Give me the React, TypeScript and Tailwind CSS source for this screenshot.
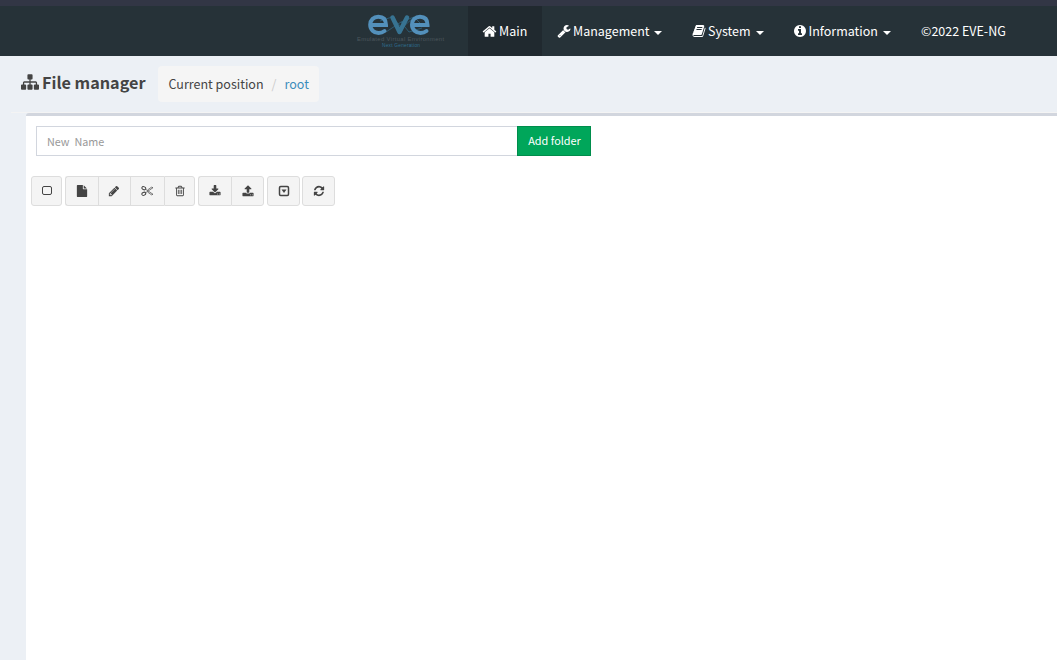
import React from "react";

const font = "font-['Noto_Sans_CJK_SC','Open_Sans',sans-serif]";

const paths = {
  home: "M1472 992v480q0 26-19 45t-45 19h-384v-384h-256v384h-384q-26 0-45-19t-19-45v-480q0-1 .5-3t.5-3l575-474 575 474q1 2 1 6zm223-69l-62 74q-8 9-21 11h-3q-13 0-21-7l-692-577-692 577q-12 8-24 7-13-2-21-11l-62-74q-8-10-7-23.5t11-21.5l719-599q32-26 76-26t76 26l244 204v-195q0-14 9-23t23-9h192q14 0 23 9t9 23v408l219 182q10 8 11 21.5t-7 23.5z",
  wrench: "M448 1472q0-26-19-45t-45-19-45 19-19 45 19 45 45 19 45-19 19-45zm644-420l-682 682q-37 37-90 37-52 0-91-37l-106-108q-38-36-38-90 0-53 38-91l681-681q39 98 114.5 173.5t173.5 114.5zm634-435q0 39-23 106-47 134-164.5 217.5t-258.5 83.5q-185 0-316.5-131.5t-131.5-316.5 131.5-316.5 316.5-131.5q58 0 121.5 16.5t107.5 46.5q16 11 16 28t-16 28l-293 169v224l193 107q5-3 79-48.5t135.5-81 70.5-35.5q15 0 23.5 10t8.5 25z",
  info: "M1152 1376v-160q0-14-9-23t-23-9h-96v-512q0-14-9-23t-23-9h-320q-14 0-23 9t-9 23v160q0 14 9 23t23 9h96v320h-96q-14 0-23 9t-9 23v160q0 14 9 23t23 9h448q14 0 23-9t9-23zm-128-896v-160q0-14-9-23t-23-9h-192q-14 0-23 9t-9 23v160q0 14 9 23t23 9h192q14 0 23-9t9-23zm640 416q0 209-103 385.5t-279.5 279.5-385.5 103-385.5-103-279.5-279.5-103-385.5 103-385.5 279.5-279.5 385.5-103 385.5 103 279.5 279.5 103 385.5z",
  book: "M1703 478q40 57 18 129l-275 906q-19 64-76.5 107.5t-122.5 43.5h-923q-77 0-148.5-53.5t-99.5-131.5q-24-67-2-127 0-4 3-27t4-37q1-8-3-21.5t-3-19.5q2-11 8-21t16.5-23.5 16.5-23.5q23-38 45-91.5t30-91.5q3-10 .5-30t-.5-28q3-11 17-28t17-23q21-36 42-92t25-90q1-9-2.5-32t.5-28q4-13 22-30.5t22-22.5q19-26 42.5-84.5t27.5-96.5q1-8-3-25.5t-2-26.5q2-8 9-18t18-23 17-21q8-12 16.5-30.5t15-35 16-36 19.5-32 26.5-23.5 36-11.5 47.5 5.5l-1 3q38-9 51-9h761q74 0 114 56t18 130l-274 906q-36 119-71.5 153.5t-128.5 34.5h-869q-27 0-38 15-11 16-1 43 24 70 144 70h923q29 0 56-15.5t35-41.5l300-987q7-22 5-57 38 15 59 43zm-1064 2q-4 13 2 22.5t20 9.5h608q13 0 25.5-9.5t16.5-22.5l21-64q4-13-2-22.5t-20-9.5h-608q-13 0-25.5 9.5t-16.5 22.5zm-83 256q-4 13 2 22.5t20 9.5h608q13 0 25.5-9.5t16.5-22.5l21-64q4-13-2-22.5t-20-9.5h-608q-13 0-25.5 9.5t-16.5 22.5z",
  sitemap: "M1792 1248v320q0 40-28 68t-68 28h-320q-40 0-68-28t-28-68v-320q0-40 28-68t68-28h96v-192h-512v192h96q40 0 68 28t28 68v320q0 40-28 68t-68 28h-320q-40 0-68-28t-28-68v-320q0-40 28-68t68-28h96v-192h-512v192h96q40 0 68 28t28 68v320q0 40-28 68t-68 28h-320q-40 0-68-28t-28-68v-320q0-40 28-68t68-28h96v-192q0-52 38-90t90-38h512v-192h-96q-40 0-68-28t-28-68v-320q0-40 28-68t68-28h320q40 0 68 28t28 68v320q0 40-28 68t-68 28h-96v192h512q52 0 90 38t38 90v192h96q40 0 68 28t28 68z",
  file: "M1152 512v-472q22 14 36 28l408 408q14 14 28 36h-472zm-128 32q0 40 28 68t68 28h544v1056q0 40-28 68t-68 28h-1344q-40 0-68-28t-28-68v-1600q0-40 28-68t68-28h800v544z",
  pencil: "M491 1536l91-91-235-235-91 91v107h128v128h107zm523-928q0-22-22-22-10 0-17 7l-542 542q-7 7-7 17 0 22 22 22 10 0 17-7l542-542q7-7 7-17zm-54-192l416 416-832 832h-416v-416zm683 96q0 53-37 90l-166 166-416-416 166-165q36-38 90-38 53 0 91 38l235 234q37 39 37 91z",
  trash: "M704 736v576q0 14-9 23t-23 9h-64q-14 0-23-9t-9-23v-576q0-14 9-23t23-9h64q14 0 23 9t9 23zm256 0v576q0 14-9 23t-23 9h-64q-14 0-23-9t-9-23v-576q0-14 9-23t23-9h64q14 0 23 9t9 23zm256 0v576q0 14-9 23t-23 9h-64q-14 0-23-9t-9-23v-576q0-14 9-23t23-9h64q14 0 23 9t9 23zm128 724v-948h-896v948q0 22 7 40.5t14.5 27 10.5 8.5h832q3 0 10.5-8.5t14.5-27 7-40.5zm-672-1076h448l-48-117q-7-9-17-11h-317q-10 2-17 11zm928 32v64q0 14-9 23t-23 9h-96v948q0 83-47 143.5t-113 60.5h-832q-66 0-113-58.5t-47-141.5v-952h-96q-14 0-23-9t-9-23v-64q0-14 9-23t23-9h309l70-167q15-37 54-63t79-26h320q40 0 79 26t54 63l70 167h309q14 0 23 9t9 23z",
  download: "M1344 1344q0-26-19-45t-45-19-45 19-19 45 19 45 45 19 45-19 19-45zm256 0q0-26-19-45t-45-19-45 19-19 45 19 45 45 19 45-19 19-45zm128-224v320q0 40-28 68t-68 28h-1472q-40 0-68-28t-28-68v-320q0-40 28-68t68-28h465l135 136q58 56 136 56t136-56l136-136h464q40 0 68 28t28 68zm-325-569q17 41-14 70l-448 448q-18 19-45 19t-45-19l-448-448q-31-29-14-70 17-39 59-39h256v-448q0-26 19-45t45-19h256q26 0 45 19t19 45v448h256q42 0 59 39z",
  upload: "M1344 1472q0-26-19-45t-45-19-45 19-19 45 19 45 45 19 45-19 19-45zm256 0q0-26-19-45t-45-19-45 19-19 45 19 45 45 19 45-19 19-45zm128-224v320q0 40-28 68t-68 28h-1472q-40 0-68-28t-28-68v-320q0-40 28-68t68-28h427q21 56 70.5 92t110.5 36h256q61 0 110.5-36t70.5-92h427q40 0 68 28t28 68zm-325-648q-17 40-59 40h-256v448q0 26-19 45t-45 19h-256q-26 0-45-19t-19-45v-448h-256q-42 0-59-40-17-39 14-69l448-448q18-19 45-19t45 19l448 448q31 30 14 69z",
  refresh: "M1639 1056q0 5-1 7-64 268-268 434.5t-478 166.5q-146 0-282.5-55t-243.5-157l-129 129q-19 19-45 19t-45-19-19-45v-448q0-26 19-45t45-19h448q26 0 45 19t19 45-19 45l-137 137q71 66 161 102t187 36q134 0 250-65t186-179q11-17 53-117 8-23 30-23h192q13 0 22.5 9.5t9.5 22.5zm25-800v448q0 26-19 45t-45 19h-448q-26 0-45-19t-19-45 19-45l138-138q-148-137-349-137-134 0-250 65t-186 179q-11 17-53 117-8 23-30 23h-199q-13 0-22.5-9.5t-9.5-22.5v-7q65-268 270-434.5t480-166.5q146 0 284 55.5t245 156.5l130-129q19-19 45-19t45 19 19 45z",
};

function Icon({ name, className }: { name: keyof typeof paths; className: string }) {
  return (
    <svg viewBox="0 0 1792 1792" fill="currentColor" className={`shrink-0 ${className}`}>
      <path d={paths[name]} />
    </svg>
  );
}

function Logo() {
  return (
    <svg viewBox="0 0 90 38" className="h-[38px] w-[90px]" fill="none">
      <g stroke="#2f6480" strokeWidth="0.8">
        <path d="M24 9 36 5 46 16 58 5 67 14M30 20 45 10 53 20 66 16M45 10 58 5" />
      </g>
      <g stroke="#5390bb" strokeWidth="4" strokeLinecap="round">
        <path d="M15.500 13H30C30 7 27 4.800 22.300 4.800S14.200 8 14.200 12.800 18 21 22.500 21Q26 21 28.500 19" />
        <path d="M57 13H71.500C71.500 7 68.500 4.800 64 4.800S56 8 56 12.800 60 21 64.500 21Q68 21 70.500 19" />
      </g>
      <path d="M36.500 5.500 43.500 20 51 5.500" stroke="#377392" strokeWidth="4.500" strokeLinecap="round" strokeLinejoin="round" />
      <g fontFamily="Liberation Sans, sans-serif">
        <text x="1" y="28.700" fontSize="5.800" fill="#4d575d" textLength="87">Emulated Virtual Environment</text>
        <text x="26" y="34.700" fontSize="4.800" fill="#2f6f90" textLength="38">Next Generation</text>
      </g>
    </svg>
  );
}

function Caret() {
  return <span className="ml-[5px] mt-[3px] border-x-4 border-t-4 border-x-transparent border-t-white" />;
}

const cell = "flex h-[30px] items-center justify-center border-[#ddd] bg-[#f4f4f4] text-[#444]";

export default function App() {
  return (
    <div className={`flex h-[660px] w-[1057px] flex-col overflow-hidden bg-[#ecf0f5] text-[#444] ${font}`}>
      <div className="h-1.5 shrink-0 bg-[#323645]" />
      <header className="flex h-[50px] shrink-0 bg-[#263238] pl-[356px] text-[12.500px] leading-[50px] text-white">
        <div className="w-[112px] pt-[6px]"><Logo /></div>
        <div className="flex w-[74px] items-center bg-[#20292f] pl-[14px]">
          <Icon name="home" className="mr-[2px] size-[15px]" /><span>Main</span>
        </div>
        <div className="flex w-[135px] items-center pl-[15px]">
          <Icon name="wrench" className="mr-[2px] size-[14px]" /><span className="w-[76px]">Management</span><Caret />
        </div>
        <div className="flex w-[101px] items-center pl-[15px]">
          <Icon name="book" className="mr-[2px] size-[14px]" /><span className="w-[43px]">System</span><Caret />
        </div>
        <div className="flex w-[128px] items-center pl-[15px]">
          <Icon name="info" className="mr-[1.500px] size-[14px]" /><span className="w-[69.500px]">Information</span><Caret />
        </div>
        <span className="pl-[15px]">©2022 EVE-NG</span>
      </header>
      <div className="flex h-[56px] shrink-0 items-center pl-[21px]">
        <Icon name="sitemap" className="mb-[4px] mr-[3px] size-[18px]" />
        <h1 className="mb-[3px] w-[116px] whitespace-nowrap text-[16.200px] font-bold">File manager</h1>
        <nav className="flex h-[36px] w-[161px] items-center rounded bg-[#f5f5f5] pl-[10.500px] text-[12.500px]">
          <span>Current position</span><span className="w-[21px] text-center text-[#ccc]">/</span><span className="text-[#3c8dbc]">root</span>
        </nav>
      </div>
      <div className="ml-[11px] h-px shrink-0 bg-[#f4f4f4]" />
      <main className="ml-[26px] flex-1 rounded-tl-[3px] border-t-[3px] border-[#d2d6de] bg-white pt-[10px]">
        <div className="ml-[10px] flex h-[30px] w-[555px]">
          <input className="w-[481px] border border-r-0 border-[#d2d6de] px-[10px] text-[10.800px] [word-spacing:2.500px] placeholder:text-[#999]" placeholder="New Name" />
          <button className="flex-1 border border-[#008d4c] bg-[#00a65a] pb-px pl-px text-[10.900px] text-white">Add folder</button>
        </div>
        <div className="ml-[5px] mt-[20px] flex">
          <button className={`${cell} w-[31px] rounded-[3px] border`}>
            <svg viewBox="0 0 12 12" className="size-3" fill="none"><rect x="1.500" y="1.500" width="9" height="8" rx="1.500" stroke="currentColor" /></svg>
          </button>
          <div className="ml-[3px] flex">
            <button className={`${cell} w-[33px] rounded-l-[3px] border-y border-l pr-px`}><Icon name="file" className="size-3" /></button>
            <button className={`${cell} w-[32px] border-y border-l pr-[2px]`}><Icon name="pencil" className="size-3" /></button>
            <button className={`${cell} w-[34px] border-y border-l pr-px`}>
              <svg viewBox="0 0 13 12" className="h-3 w-[13px]" fill="none" stroke="currentColor">
                <ellipse cx="2.800" cy="3.200" rx="2" ry="1.500" transform="rotate(25 2.800 3.200)" /><ellipse cx="2.800" cy="8.800" rx="2" ry="1.500" transform="rotate(-25 2.800 8.800)" />
                <path d="M4.500 4.200 12 9.300 10.500 9.800 6.500 7M4.500 7.800 12 2.700 10.500 2.200 6.500 5" strokeWidth=".7" />
              </svg>
            </button>
            <button className={`${cell} w-[31px] rounded-r-[3px] border pb-px`}><Icon name="trash" className="size-3" /></button>
          </div>
          <div className="ml-[3px] flex">
            <button className={`${cell} w-[33px] rounded-l-[3px] border-y border-l pb-px pr-px`}><Icon name="download" className="size-3" /></button>
            <button className={`${cell} w-[33px] rounded-r-[3px] border`}><Icon name="upload" className="size-3" /></button>
          </div>
          <button className={`${cell} ml-[3px] w-[33px] rounded-[3px] border pb-px`}>
            <svg viewBox="0 0 12 12" className="size-3" fill="none"><rect x="1.500" y="1.500" width="9" height="9" rx="1.200" stroke="currentColor" strokeWidth="1.500" /><path d="M3.500 4.500h5L6 8z" fill="currentColor" /></svg>
          </button>
          <button className={`${cell} ml-[2px] w-[33px] rounded-[3px] border`}><Icon name="refresh" className="size-3" /></button>
        </div>
      </main>
    </div>
  );
}
